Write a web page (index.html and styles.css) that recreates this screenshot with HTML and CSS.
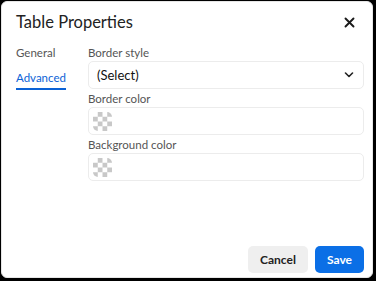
FILE: index.html
```html
<!DOCTYPE html>
<html>
<head>
<meta charset="utf-8">
<link rel="stylesheet" href="styles.css">
</head>
<body>
<div class="dialog">
  <div class="header">
    <h1 class="title">Table Properties</h1>
    <button class="close" aria-label="Close">
      <svg width="11" height="11" viewBox="0 0 11 11"><path d="M1.5 1.5L9.5 9.5M9.5 1.5L1.5 9.5" stroke="#1a1a1a" stroke-width="1.9" stroke-linecap="round"/></svg>
    </button>
  </div>
  <div class="body">
    <nav class="nav">
      <a class="tab">General</a>
      <a class="tab active">Advanced</a>
    </nav>
    <div class="fields">
      <div class="field">
        <label class="label">Border style</label>
        <div class="control select">
          <span>(Select)</span>
          <svg width="10" height="6" viewBox="0 0 10 6"><path d="M1.5 1L5 4.5L8.5 1" fill="none" stroke="#222" stroke-width="1.6" stroke-linecap="round" stroke-linejoin="round"/></svg>
        </div>
      </div>
      <div class="field">
        <label class="label">Border color</label>
        <div class="control"><span class="swatch"></span></div>
      </div>
      <div class="field">
        <label class="label">Background color</label>
        <div class="control"><span class="swatch"></span></div>
      </div>
    </div>
  </div>
  <div class="footer">
    <button class="btn cancel">Cancel</button>
    <button class="btn save">Save</button>
  </div>
</div>
</body>
</html>
```
FILE: styles.css
```css
html, body {
  margin: 0;
  height: 100%;
  background: #000;
}
body {
  padding: 1px 3px 3px 1px;
  box-sizing: border-box;
  font-family: Lato, "Noto Sans", sans-serif;
}
.dialog {
  height: 100%;
  background: #fff;
  border-radius: 6px;
  border: 1px solid #e6e6e6;
  box-sizing: border-box;
  display: flex;
  flex-direction: column;
  padding: 0 8px 0 14px;
}
.header {
  display: flex;
  align-items: center;
  justify-content: space-between;
  height: 40px;
}
.title {
  margin: 0;
  font-size: 16.5px;
  font-weight: 400;
  color: #222;
}
.close {
  border: 0;
  background: none;
  padding: 0;
  width: 24px;
  height: 24px;
  display: flex;
  align-items: center;
  justify-content: center;
  margin-right: 3px;
}
.body {
  display: flex;
  flex: 1;
  padding-top: 3px;
}
.nav {
  width: 72px;
  display: flex;
  flex-direction: column;
  gap: 7px;
}
.tab {
  font-size: 11.5px;
  color: #555;
  align-self: flex-start;
  line-height: 16px;
  padding-bottom: 2px;
}
.tab.active {
  color: #0b62d6;
  border-bottom: 2px solid #0b62d6;
}
.fields {
  flex: 1;
  display: flex;
  flex-direction: column;
  gap: 2px;
}
.field {
  display: flex;
  flex-direction: column;
}
.label {
  font-size: 11.5px;
  color: #555;
  line-height: 16px;
}
.control {
  height: 28px;
  border: 1px solid #ececec;
  border-radius: 5px;
  box-sizing: border-box;
  display: flex;
  align-items: center;
  padding: 0 8px 0 4px;
}
.select {
  justify-content: space-between;
  font-size: 13px;
  color: #111;
  padding-left: 8px;
  padding-right: 9px;
}
.swatch {
  width: 19px;
  height: 19px;
  border-radius: 5px;
  background-color: #fff;
  background-image: conic-gradient(#c8c8c8 25%, #fff 0 50%, #c8c8c8 0 75%, #fff 0);
  background-size: 9.5px 9.5px;
}
.footer {
  display: flex;
  justify-content: flex-end;
  gap: 7px;
  padding-bottom: 4px;
}
.btn {
  height: 27px;
  border: 0;
  border-radius: 5px;
  font-family: Lato, "Noto Sans", sans-serif;
  font-size: 12px;
  font-weight: 700;
  padding: 0;
}
.cancel {
  background: #efefef;
  color: #222;
  width: 60px;
}
.save {
  background: #0b6fe6;
  color: #fff;
  width: 49px;
}
```
